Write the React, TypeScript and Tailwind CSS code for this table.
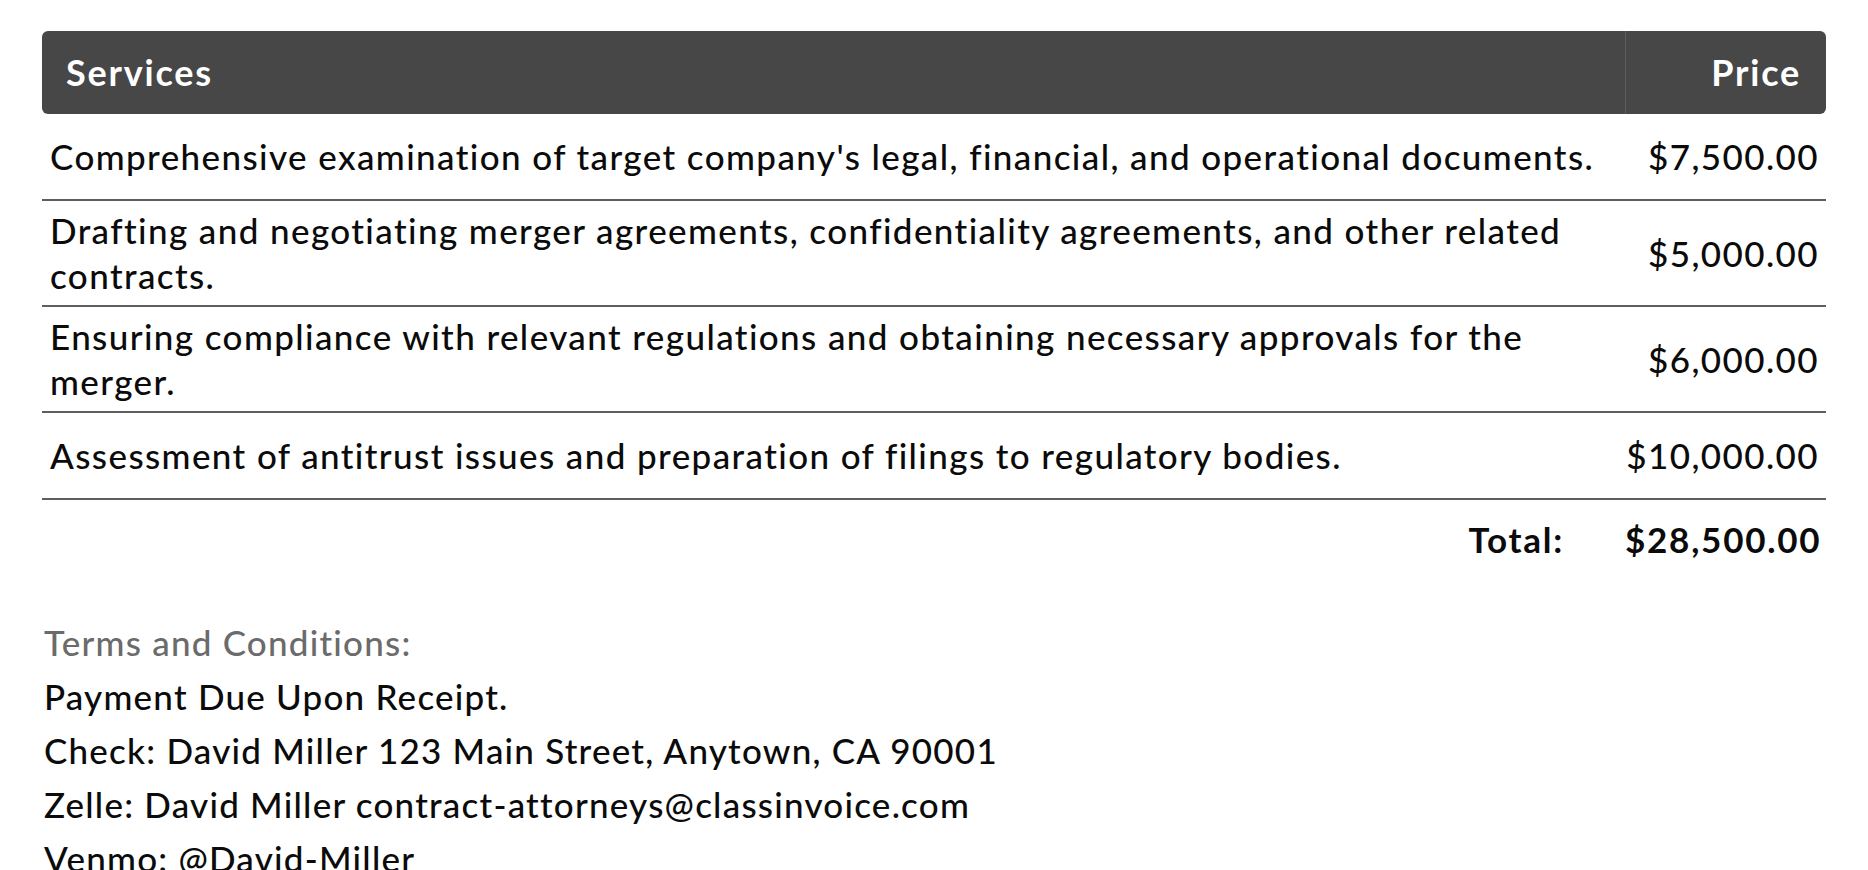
import React from "react";

const rows = [
  {
    desc: "Comprehensive examination of target company's legal, financial, and operational documents.",
    price: "$7,500.00",
  },
  {
    desc: "Drafting and negotiating merger agreements, confidentiality agreements, and other related contracts.",
    price: "$5,000.00",
  },
  {
    desc: "Ensuring compliance with relevant regulations and obtaining necessary approvals for the merger.",
    price: "$6,000.00",
  },
  {
    desc: "Assessment of antitrust issues and preparation of filings to regulatory bodies.",
    price: "$10,000.00",
  },
];

export default function App() {
  return (
    <div className="min-h-screen bg-white px-[42px] pt-[31px] text-[#0b0b0b] [font-family:Lato,'Open_Sans',sans-serif] font-medium text-[35px] tracking-[0.04em]">
      <div className="grid grid-cols-[1fr_201px] h-[83px] text-white font-bold text-[36px] tracking-[0.05em]">
        <div className="bg-[#474747] rounded-l-[6px] flex items-center pl-[24px] pb-[2px]">Services</div>
        <div className="bg-[#474747] rounded-r-[6px] border-l border-[#5c5c5c] flex items-center justify-end pr-[25px] pb-[2px]">
          Price
        </div>
      </div>
      {rows.map((r, i) => (
        <div
          key={i}
          className="grid grid-cols-[1fr_201px] items-center border-b-2 border-[#5e5e5e] leading-[45px]"
        >
          <div className="py-[7px] pl-[8px] pr-[8px]">{r.desc}</div>
          <div className="py-[20px] pr-[7px] text-right">{r.price}</div>
        </div>
      ))}
      <div className="grid grid-cols-[1fr_201px] items-center leading-[45px] font-bold py-[17px] tracking-[0.05em]">
        <div className="text-right pr-[61px]">Total:</div>
        <div className="text-right pr-[7px]">$28,500.00</div>
      </div>
      <div className="mt-[36px] pl-[2px] leading-[54px] tracking-[0.035em]">
        <div className="text-[#6b6b6b]">Terms and Conditions:</div>
        <div>Payment Due Upon Receipt.</div>
        <div>Check: David Miller 123 Main Street, Anytown, CA 90001</div>
        <div>Zelle: David Miller contract-attorneys@classinvoice.com</div>
        <div>Venmo: @David-Miller</div>
      </div>
    </div>
  );
}
